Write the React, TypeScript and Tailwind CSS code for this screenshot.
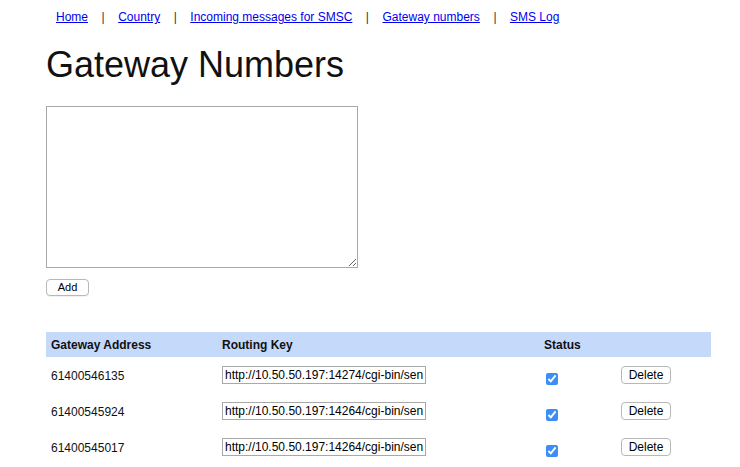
import { Fragment } from 'react';

const links = ['Home', 'Country', 'Incoming messages for SMSC', 'Gateway numbers', 'SMS Log'];

const rows = [
    { address: '61400546135', key: 'http://10.50.50.197:14274/cgi-bin/sendsms' },
    { address: '61400545924', key: 'http://10.50.50.197:14264/cgi-bin/sendsms' },
    { address: '61400545017', key: 'http://10.50.50.197:14264/cgi-bin/sendsms' },
];

export default function App() {
    return (
        <div className="min-h-screen bg-white text-[#111] font-['Liberation_Sans',Arial,sans-serif] px-[46px]">
            {/* Nav */}
            <nav className="flex items-center pl-[10px] pt-[10px] text-[12px] leading-[14px]">
                {links.map((l, i) => (
                    <Fragment key={l}>
                        {i > 0 && <span className="px-[13.5px] text-[#333]">|</span>}
                        <a href="#" className="text-[#0000ee] underline">{l}</a>
                    </Fragment>
                ))}
            </nav>

            <h1 className="text-[36px] leading-[40px] mt-[21px] font-normal">Gateway Numbers</h1>

            <div className="mt-[21px]">
                <textarea className="block w-[312px] h-[162px] border border-[#a9a9a9] bg-white" />
            </div>
            <button className="mt-[11px] block w-[43px] h-[17px] text-[11px] leading-[15px] border border-[#b8b8b8] rounded-[4px] bg-white text-black shadow-[0_1px_0_rgba(0,0,0,0.05)]">
                Add
            </button>

            {/* Table */}
            <table className="mt-[36px] w-[665px] text-[12px] border-collapse">
                <thead>
                    <tr className="bg-[#c5d9fb] h-[25px] text-left">
                        <th className="w-[171px] pl-[5px] font-bold">Gateway Address</th>
                        <th className="w-[322px] pl-[5px] font-bold">Routing Key</th>
                        <th className="w-[77px] pl-[5px] font-bold">Status</th>
                        <th className="pl-[5px]"></th>
                    </tr>
                </thead>
                <tbody>
                    {rows.map((r) => (
                        <tr key={r.address} className="h-[36px]">
                            <td className="pl-[5px] pt-[2px] align-middle">{r.address}</td>
                            <td className="pl-[5px] align-middle">
                                <input
                                    readOnly
                                    value={r.key}
                                    className="block w-[204px] h-[18px] px-[2px] text-[12px] border border-[#a9a9a9] bg-white text-black"
                                />
                            </td>
                            <td className="pl-[7px] align-middle pt-[7px]">
                                <input type="checkbox" defaultChecked className="block w-[12px] h-[12px] accent-[#3b8ef7]" />
                            </td>
                            <td className="pl-[5px] align-middle">
                                <button className="block w-[50px] h-[18px] text-[12px] leading-[16px] border border-[#b8b8b8] rounded-[4px] bg-white text-black">
                                    Delete
                                </button>
                            </td>
                        </tr>
                    ))}
                </tbody>
            </table>
        </div>
    );
}
